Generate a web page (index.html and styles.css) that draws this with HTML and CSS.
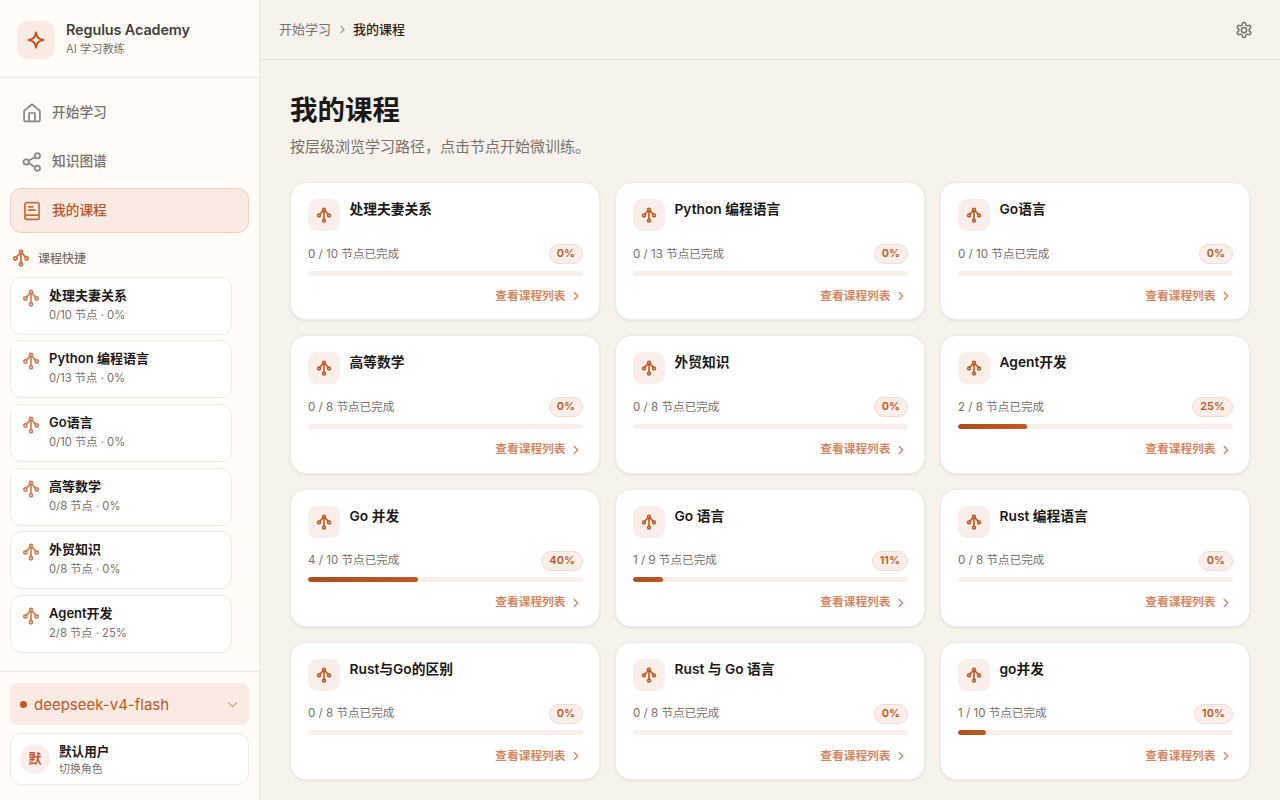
FILE: index.html
```html
<!DOCTYPE html>
<html lang="zh-CN">
<head>
  <meta charset="UTF-8">
  <meta name="viewport" content="width=device-width, initial-scale=1.0">
  <title>我的课程 - Regulus Academy</title>
  <link rel="stylesheet" href="styles.css">
</head>
<body>
  <!-- Icon sprite -->
  <svg class="sprite" xmlns="http://www.w3.org/2000/svg">
    <symbol id="i-tree" viewBox="0 0 24 24"><circle cx="12" cy="4" r="2.100"/><circle cx="4.500" cy="12.600" r="2.100"/><circle cx="19.500" cy="12.600" r="2.100"/><circle cx="12" cy="20.400" r="2.100"/><path d="M12 6.100v12.200M10.400 5.500C9 8 7.500 9 5.700 10.700M13.600 5.500c1.400 2.500 2.900 3.500 4.700 5.200"/></symbol>
    <symbol id="i-right" viewBox="0 0 24 24"><path d="m9 18 6-6-6-6"/></symbol>
    <symbol id="i-down" viewBox="0 0 24 24"><path d="m5 9 7 7 7-7"/></symbol>
    <symbol id="i-home" viewBox="0 0 24 24"><path d="M2.500 9.500 12 1.500l9.500 8V20a2 2 0 0 1-2 2h-15a2 2 0 0 1-2-2zM8.500 22V12h7V22"/></symbol>
    <symbol id="i-share" viewBox="0 0 24 24"><circle cx="18.500" cy="4.500" r="3.200"/><circle cx="5" cy="12" r="3.200"/><circle cx="18.500" cy="19.500" r="3.200"/><path d="m8 13.600 7.600 4.300M15.600 6.100 8 10.400"/></symbol>
    <symbol id="i-book" viewBox="0 0 24 24"><path d="M3.500 19.500v-15A2.500 2.500 0 0 1 6 2h12.500A2 2 0 0 1 20.500 4v16a2 2 0 0 1-2 2H6a2.500 2.500 0 0 1 0-5h14.500M8 7h5M8 11h8"/></symbol>
    <symbol id="i-star" viewBox="0 0 24 24"><path d="M12 3c1 6 3 8 9 9-6 1-8 3-9 9-1-6-3-8-9-9 6-1 8-3 9-9z"/></symbol>
    <symbol id="i-gear" viewBox="0 0 24 24"><path d="M12.220 2h-.44a2 2 0 0 0-2 2v.18a2 2 0 0 1-1 1.730l-.43.25a2 2 0 0 1-2 0l-.15-.08a2 2 0 0 0-2.730.73l-.22.38a2 2 0 0 0 .73 2.730l.15.1a2 2 0 0 1 1 1.720v.51a2 2 0 0 1-1 1.740l-.15.09a2 2 0 0 0-.73 2.730l.22.38a2 2 0 0 0 2.730.73l.15-.08a2 2 0 0 1 2 0l.43.25a2 2 0 0 1 1 1.730V20a2 2 0 0 0 2 2h.44a2 2 0 0 0 2-2v-.18a2 2 0 0 1 1-1.730l.43-.25a2 2 0 0 1 2 0l.15.08a2 2 0 0 0 2.730-.73l.22-.39a2 2 0 0 0-.73-2.730l-.15-.08a2 2 0 0 1-1-1.740v-.5a2 2 0 0 1 1-1.740l.15-.09a2 2 0 0 0 .73-2.730l-.22-.38a2 2 0 0 0-2.730-.73l-.15.08a2 2 0 0 1-2 0l-.43-.25a2 2 0 0 1-1-1.730V4a2 2 0 0 0-2-2z"/><circle cx="12" cy="12" r="3.500"/></symbol>
  </svg>

  <div class="app">
    <!-- Sidebar -->
    <aside class="sidebar">
      <div class="brand">
        <div class="brand-logo"><svg class="icon"><use href="#i-star"/></svg></div>
        <div>
          <div class="brand-name">Regulus Academy</div>
          <div class="brand-sub">AI 学习教练</div>
        </div>
      </div>

      <nav class="nav">
        <a class="nav-item"><svg class="icon"><use href="#i-home"/></svg><span>开始学习</span></a>
        <a class="nav-item"><svg class="icon"><use href="#i-share"/></svg><span>知识图谱</span></a>
        <a class="nav-item active"><svg class="icon"><use href="#i-book"/></svg><span>我的课程</span></a>
      </nav>

      <div class="shortcuts">
        <div class="shortcuts-title"><svg class="icon"><use href="#i-tree"/></svg><span>课程快捷</span></div>
        <a class="shortcut"><svg class="icon"><use href="#i-tree"/></svg><div><b>处理夫妻关系</b><p>0/10 节点 · 0%</p></div></a>
        <a class="shortcut"><svg class="icon"><use href="#i-tree"/></svg><div><b>Python 编程语言</b><p>0/13 节点 · 0%</p></div></a>
        <a class="shortcut"><svg class="icon"><use href="#i-tree"/></svg><div><b>Go语言</b><p>0/10 节点 · 0%</p></div></a>
        <a class="shortcut"><svg class="icon"><use href="#i-tree"/></svg><div><b>高等数学</b><p>0/8 节点 · 0%</p></div></a>
        <a class="shortcut"><svg class="icon"><use href="#i-tree"/></svg><div><b>外贸知识</b><p>0/8 节点 · 0%</p></div></a>
        <a class="shortcut"><svg class="icon"><use href="#i-tree"/></svg><div><b>Agent开发</b><p>2/8 节点 · 25%</p></div></a>
      </div>

      <div class="sidebar-footer">
        <div class="model"><span class="dot"></span><span class="model-name">deepseek-v4-flash</span><svg class="icon"><use href="#i-down"/></svg></div>
        <div class="user">
          <div class="avatar">默</div>
          <div><b>默认用户</b><p>切换角色</p></div>
        </div>
      </div>
    </aside>

    <!-- Main -->
    <main class="main">
      <header class="topbar">
        <div class="crumbs"><span>开始学习</span><svg class="icon"><use href="#i-right"/></svg><b>我的课程</b></div>
        <svg class="icon gear"><use href="#i-gear"/></svg>
      </header>

      <section class="content">
        <h1>我的课程</h1>
        <p class="lead">按层级浏览学习路径，点击节点开始微训练。</p>

        <div class="grid">
          <article class="card">
            <div class="card-head"><div class="card-icon"><svg class="icon"><use href="#i-tree"/></svg></div><h2>处理夫妻关系</h2></div>
            <div class="card-meta"><span>0 / 10 节点已完成</span><span class="pill">0%</span></div>
            <div class="bar"><div class="fill" style="width: 0%"></div></div>
            <a class="card-link">查看课程列表<svg class="icon"><use href="#i-right"/></svg></a>
          </article>
          <article class="card">
            <div class="card-head"><div class="card-icon"><svg class="icon"><use href="#i-tree"/></svg></div><h2>Python 编程语言</h2></div>
            <div class="card-meta"><span>0 / 13 节点已完成</span><span class="pill">0%</span></div>
            <div class="bar"><div class="fill" style="width: 0%"></div></div>
            <a class="card-link">查看课程列表<svg class="icon"><use href="#i-right"/></svg></a>
          </article>
          <article class="card">
            <div class="card-head"><div class="card-icon"><svg class="icon"><use href="#i-tree"/></svg></div><h2>Go语言</h2></div>
            <div class="card-meta"><span>0 / 10 节点已完成</span><span class="pill">0%</span></div>
            <div class="bar"><div class="fill" style="width: 0%"></div></div>
            <a class="card-link">查看课程列表<svg class="icon"><use href="#i-right"/></svg></a>
          </article>
          <article class="card">
            <div class="card-head"><div class="card-icon"><svg class="icon"><use href="#i-tree"/></svg></div><h2>高等数学</h2></div>
            <div class="card-meta"><span>0 / 8 节点已完成</span><span class="pill">0%</span></div>
            <div class="bar"><div class="fill" style="width: 0%"></div></div>
            <a class="card-link">查看课程列表<svg class="icon"><use href="#i-right"/></svg></a>
          </article>
          <article class="card">
            <div class="card-head"><div class="card-icon"><svg class="icon"><use href="#i-tree"/></svg></div><h2>外贸知识</h2></div>
            <div class="card-meta"><span>0 / 8 节点已完成</span><span class="pill">0%</span></div>
            <div class="bar"><div class="fill" style="width: 0%"></div></div>
            <a class="card-link">查看课程列表<svg class="icon"><use href="#i-right"/></svg></a>
          </article>
          <article class="card">
            <div class="card-head"><div class="card-icon"><svg class="icon"><use href="#i-tree"/></svg></div><h2>Agent开发</h2></div>
            <div class="card-meta"><span>2 / 8 节点已完成</span><span class="pill">25%</span></div>
            <div class="bar"><div class="fill" style="width: 25%"></div></div>
            <a class="card-link">查看课程列表<svg class="icon"><use href="#i-right"/></svg></a>
          </article>
          <article class="card">
            <div class="card-head"><div class="card-icon"><svg class="icon"><use href="#i-tree"/></svg></div><h2>Go 并发</h2></div>
            <div class="card-meta"><span>4 / 10 节点已完成</span><span class="pill">40%</span></div>
            <div class="bar"><div class="fill" style="width: 40%"></div></div>
            <a class="card-link">查看课程列表<svg class="icon"><use href="#i-right"/></svg></a>
          </article>
          <article class="card">
            <div class="card-head"><div class="card-icon"><svg class="icon"><use href="#i-tree"/></svg></div><h2>Go 语言</h2></div>
            <div class="card-meta"><span>1 / 9 节点已完成</span><span class="pill">11%</span></div>
            <div class="bar"><div class="fill" style="width: 11%"></div></div>
            <a class="card-link">查看课程列表<svg class="icon"><use href="#i-right"/></svg></a>
          </article>
          <article class="card">
            <div class="card-head"><div class="card-icon"><svg class="icon"><use href="#i-tree"/></svg></div><h2>Rust 编程语言</h2></div>
            <div class="card-meta"><span>0 / 8 节点已完成</span><span class="pill">0%</span></div>
            <div class="bar"><div class="fill" style="width: 0%"></div></div>
            <a class="card-link">查看课程列表<svg class="icon"><use href="#i-right"/></svg></a>
          </article>
          <article class="card">
            <div class="card-head"><div class="card-icon"><svg class="icon"><use href="#i-tree"/></svg></div><h2>Rust与Go的区别</h2></div>
            <div class="card-meta"><span>0 / 8 节点已完成</span><span class="pill">0%</span></div>
            <div class="bar"><div class="fill" style="width: 0%"></div></div>
            <a class="card-link">查看课程列表<svg class="icon"><use href="#i-right"/></svg></a>
          </article>
          <article class="card">
            <div class="card-head"><div class="card-icon"><svg class="icon"><use href="#i-tree"/></svg></div><h2>Rust 与 Go 语言</h2></div>
            <div class="card-meta"><span>0 / 8 节点已完成</span><span class="pill">0%</span></div>
            <div class="bar"><div class="fill" style="width: 0%"></div></div>
            <a class="card-link">查看课程列表<svg class="icon"><use href="#i-right"/></svg></a>
          </article>
          <article class="card">
            <div class="card-head"><div class="card-icon"><svg class="icon"><use href="#i-tree"/></svg></div><h2>go并发</h2></div>
            <div class="card-meta"><span>1 / 10 节点已完成</span><span class="pill">10%</span></div>
            <div class="bar"><div class="fill" style="width: 10%"></div></div>
            <a class="card-link">查看课程列表<svg class="icon"><use href="#i-right"/></svg></a>
          </article>
        </div>
      </section>
    </main>
  </div>
</body>
</html>
```
FILE: styles.css
```css
* {
  box-sizing: border-box;
}
body {
  margin: 0;
  font-family: Inter, "Noto Sans CJK SC", sans-serif;
  font-size: 15px;
  color: #1c1917;
  background: #f7f2eb;
}
p, h1, h2 {
  margin: 0;
}
.sprite {
  display: none;
}
.icon {
  width: 18px;
  height: 18px;
  fill: none;
  stroke: currentColor;
  stroke-width: 2;
  stroke-linecap: round;
  stroke-linejoin: round;
  flex-shrink: 0;
}
.app {
  display: flex;
  height: 800px;
  overflow: hidden;
}

/* Sidebar */
.sidebar {
  width: 260px;
  flex-shrink: 0;
  display: flex;
  flex-direction: column;
  background: #fffcf7;
  border-right: 1px solid #e9e5e0;
}
.brand {
  display: flex;
  align-items: center;
  gap: 11px;
  height: 78px;
  padding: 2px 17px 0;
  border-bottom: 1px solid #ebe7e2;
}
.brand-logo {
  display: grid;
  place-items: center;
  width: 38px;
  height: 38px;
  border-radius: 11px;
  background: #f9ebe4;
  color: #c2571f;
}
.brand-logo .icon {
  width: 20px;
  height: 20px;
  stroke-width: 2.400;
}
.brand-name {
  margin-top: -2px;
  font-size: 14.400px;
  font-weight: 600;
  letter-spacing: -0.1px;
  line-height: 20px;
  color: #44403c;
}
.brand-sub {
  font-size: 11.250px;
  line-height: 18px;
  color: #78716c;
}
.nav {
  display: flex;
  flex-direction: column;
  gap: 4px;
  padding: 12px 10px 0;
}
.nav-item {
  display: flex;
  align-items: center;
  gap: 10px;
  height: 45px;
  padding: 0 11px;
  border: 1px solid transparent;
  border-radius: 11px;
  font-size: 13.700px;
  font-weight: 500;
  color: #78716c;
}
.nav-item span {
  margin-top: -3px;
}
.nav-item .icon {
  width: 20px;
  height: 20px;
  opacity: 0.85;
}
.nav-item.active {
  background: #f9ebe4;
  border-color: #f0cfbd;
  color: #c2571f;
}
.shortcuts {
  flex: 1;
  display: flex;
  flex-direction: column;
  gap: 5.650px;
  padding: 15px 27px 0 10px;
}
.shortcuts-title {
  display: flex;
  align-items: center;
  gap: 8px;
  height: 20px;
  margin-bottom: 3px;
  padding-left: 2px;
  font-size: 12px;
  font-weight: 500;
  color: #78716c;
}
.shortcuts-title span {
  margin-top: -2px;
}
.shortcuts .icon {
  color: #c2571f;
  opacity: 0.85;
  stroke-width: 2.300;
}
.shortcut {
  display: flex;
  gap: 9px;
  height: 58px;
  padding: 8px 11px;
  border: 1px solid #ebebeb;
  border-radius: 11px;
  background: #fff;
}
.shortcut .icon {
  margin-top: 3px;
  opacity: 0.75;
}
.shortcut b {
  display: block;
  font-size: 13px;
  font-weight: 600;
  line-height: 18px;
}
.shortcut p {
  margin-top: 3px;
  font-size: 11.250px;
  line-height: 17px;
  color: #78716c;
}
.sidebar-footer {
  display: flex;
  flex-direction: column;
  gap: 8px;
  height: 129px;
  padding: 11px 10px;
  border-top: 1px solid #ebe7e2;
}
.model {
  display: flex;
  align-items: center;
  gap: 7px;
  height: 42px;
  padding: 0 10px;
  border-radius: 8px;
  background: #f9ebe4;
  color: #c2571f;
}
.model .dot {
  width: 7px;
  height: 7px;
  border-radius: 50%;
  background: #c2571f;
}
.model-name {
  flex: 1;
}
.model .icon {
  width: 13px;
  height: 13px;
  opacity: 0.6;
}
.user {
  display: flex;
  align-items: center;
  gap: 9px;
  height: 52px;
  padding: 2px 9px 0;
  border: 1px solid #ebebeb;
  border-radius: 11px;
  background: #fff;
}
.avatar {
  display: grid;
  place-items: center;
  width: 30px;
  height: 30px;
  padding-bottom: 3px;
  margin-top: -2px;
  border-radius: 50%;
  background: #faeeea;
  color: #c2571f;
  font-size: 13px;
  font-weight: 600;
}
.user b {
  display: block;
  font-size: 12.600px;
  font-weight: 600;
  line-height: 17px;
}
.user p {
  font-size: 10.900px;
  line-height: 18px;
  color: #78716c;
}

/* Main */
.main {
  flex: 1;
}
.topbar {
  display: flex;
  align-items: center;
  justify-content: space-between;
  height: 60px;
  padding: 0 27px 0 19px;
  border-bottom: 1px solid #e5e0da;
}
.crumbs {
  display: flex;
  align-items: center;
  gap: 4.500px;
  margin-top: -2px;
  font-size: 13px;
  color: #78716c;
}
.crumbs b {
  font-weight: 500;
  color: #292524;
}
.crumbs .icon {
  width: 13px;
  height: 13px;
  margin-top: 2px;
  opacity: 0.7;
}
.gear {
  color: #78716c;
}
.content {
  padding: 30px;
}
h1 {
  font-size: 27.500px;
  font-weight: 600;
  line-height: 40px;
}
.lead {
  margin-top: 5px;
  font-size: 15px;
  line-height: 24px;
  color: #78716c;
}
.grid {
  display: grid;
  grid-template-columns: repeat(3, 1fr);
  gap: 15px;
  margin-top: 23px;
}
.card {
  height: 138.250px;
  padding: 16px 16px 16px 17px;
  border: 1px solid #ececec;
  border-radius: 16px;
  background: #fff;
  box-shadow: 0 1px 3px rgba(0, 0, 0, 0.08);
}
.card-head {
  display: flex;
  gap: 9.500px;
}
.card-icon {
  display: grid;
  place-items: center;
  width: 32px;
  height: 32px;
  border-radius: 9px;
  background: #faeeea;
  color: #c2571f;
}
.card-icon .icon {
  width: 16px;
  height: 16px;
  stroke-width: 2.400;
}
.card h2 {
  font-size: 13.750px;
  font-weight: 600;
  line-height: 20px;
}
.card-meta {
  display: flex;
  align-items: center;
  justify-content: space-between;
  height: 20px;
  margin-top: 13px;
  font-size: 11.600px;
  color: #78716c;
}
.card-meta > span:first-child {
  margin-top: -3px;
}
.pill {
  height: 20px;
  padding: 0 7px;
  border: 1px solid #f5dacd;
  border-radius: 10px;
  background: #faeeea;
  color: #c2571f;
  font-size: 11px;
  font-weight: 600;
  line-height: 17px;
}
.bar {
  height: 5px;
  margin-top: 6.600px;
  border-radius: 3px;
  background: #faeeea;
  overflow: hidden;
}
.fill {
  height: 100%;
  border-radius: 3px;
  background: linear-gradient(90deg, #a8511f, #c2571f);
}
.card-link {
  display: flex;
  align-items: center;
  justify-content: flex-end;
  gap: 3.500px;
  margin-top: 11.400px;
  font-size: 11.700px;
  font-weight: 600;
  line-height: 18px;
  color: #c2571f;
  opacity: 0.7;
}
.card-link .icon {
  width: 14px;
  height: 14px;
  margin-top: 1px;
  stroke-width: 2.400;
}
```
